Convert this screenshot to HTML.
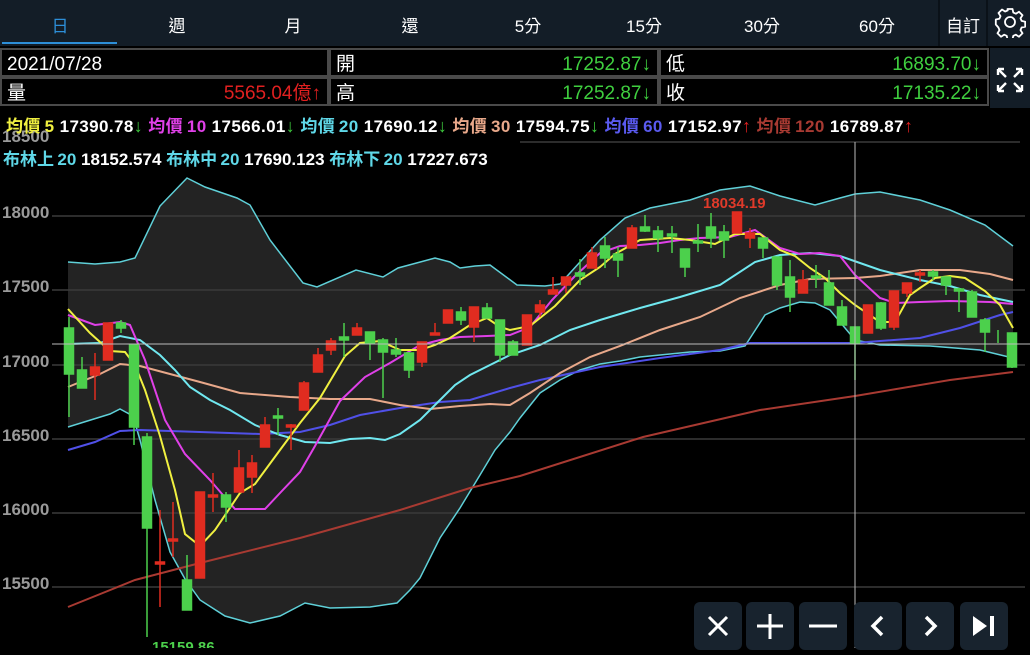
<!DOCTYPE html>
<html><head><meta charset="utf-8"><style>
*{margin:0;padding:0;box-sizing:border-box}
body{width:1030px;height:648px;background:#000;overflow:hidden;position:relative;font-family:"Liberation Sans","Noto Sans CJK TC",sans-serif;color:#fff}
.tabs{position:absolute;left:0;top:0;width:1030px;height:46px;background:#131d27}
.tab{position:absolute;top:12px;font-size:17px;transform:translateX(-50%)}
.ul{position:absolute;left:2px;top:42px;width:115px;height:2px;background:#2d8fd8}
.vs{position:absolute;top:0;width:2px;height:46px;background:#0a1118}
.info{position:absolute;top:48px;left:0;width:990px;height:60px}
.cell{position:absolute;height:29px;border:2px solid #4a4a4a;background:#000;font-size:19px;line-height:25px;padding:2px 5px 0}
.cell .v{position:absolute;right:6px;top:2px}
.g{color:#3fcf3f}.r{color:#e02020}
.exp{position:absolute;left:990px;top:48px;width:40px;height:60px;background:#131d27}
.ma{position:absolute;left:6px;font-size:17px;font-weight:bold;white-space:nowrap}
.ma .g,.ma .r{font-size:18px}
.btn{position:absolute;top:602px;width:48px;height:48px;background:#18232e;border-radius:6px}
</style></head><body>
<div class="tabs">
<div class="tab" style="left:60px;color:#2d8fd8">日</div>
<div class="tab" style="left:177px">週</div>
<div class="tab" style="left:293px">月</div>
<div class="tab" style="left:410px">還</div>
<div class="tab" style="left:528px">5分</div>
<div class="tab" style="left:644px">15分</div>
<div class="tab" style="left:762px">30分</div>
<div class="tab" style="left:877px">60分</div>
<div class="tab" style="left:963px">自訂</div>
<div class="ul"></div>
<div class="vs" style="left:938px"></div><div class="vs" style="left:986px"></div>
<svg style="position:absolute;left:994px;top:6px" width="32" height="32" viewBox="0 0 32 32"><path d="M13.5 3h5l.8 3.6 2.6 1.1 3.1-2 3.5 3.5-2 3.1 1.1 2.6 3.6.8v5l-3.6.8-1.1 2.6 2 3.1-3.5 3.5-3.1-2-2.6 1.1-.8 3.6h-5l-.8-3.6-2.6-1.1-3.1 2-3.5-3.5 2-3.1-1.1-2.6L1.8 18.5v-5l3.6-.8 1.1-2.6-2-3.1 3.5-3.5 3.1 2 2.6-1.1z" fill="none" stroke="#fff" stroke-width="1.8" stroke-linejoin="round"/><circle cx="16" cy="16" r="5" fill="none" stroke="#fff" stroke-width="1.8"/></svg>
</div>
<div class="info">
<div class="cell" style="left:0;top:0;width:329px">2021/07/28</div>
<div class="cell" style="left:329px;top:0;width:330px">開<span class="v g">17252.87↓</span></div>
<div class="cell" style="left:659px;top:0;width:330px">低<span class="v g">16893.70↓</span></div>
<div class="cell" style="left:0;top:29px;width:329px">量<span class="v r">5565.04億↑</span></div>
<div class="cell" style="left:329px;top:29px;width:330px">高<span class="v g">17252.87↓</span></div>
<div class="cell" style="left:659px;top:29px;width:330px">收<span class="v g">17135.22↓</span></div>
</div>
<div class="exp"><svg width="40" height="60" viewBox="0 0 40 60"><g stroke="#fff" stroke-width="2.4" fill="none"><path d="M8 21l8 8M8 21h6M8 21v6M32 21l-8 8M32 21h-6M32 21v6M8 43l8-8M8 43h6M8 43v-6M32 43l-8-8M32 43h-6M32 43v-6"/></g></svg></div>

<svg style="position:absolute;left:0;top:0" width="1030" height="648" viewBox="0 0 1030 648">
<g fill="#9a9a9a" font-size="17" font-weight="bold" font-family="Liberation Sans,sans-serif">
<text x="2" y="142">18500</text><text x="2" y="218">18000</text><text x="2" y="292">17500</text><text x="2" y="367">17000</text><text x="2" y="441">16500</text><text x="2" y="515">16000</text><text x="2" y="589">15500</text></g>
<polygon fill="#232323" points="68,262 95,264 120,262 135,258 160,206 187,178 205,187 237,198 250,205 270,240 303,283 317,287 356,270 383,277 398,268 435,258 450,262 460,268 475,266 490,265 517,285 545,286 560,284 600,240 625,218 650,208 690,200 720,190 750,186 780,196 815,205 840,198 855,194 880,192 920,200 950,210 985,225 1013,246 1013,358 980,350 930,346 880,345 855,340 830,310 815,303 800,302 780,308 765,315 745,346 720,351 690,352 660,355 640,357 620,361 600,364 580,370 560,380 540,393 520,418 510,432 495,450 480,475 460,508 440,538 420,578 410,590 397,603 370,607 330,608 305,603 280,616 250,623 225,616 200,600 185,579 170,552 155,500 140,440 133,416 120,409 110,414 68,427"/>
<g stroke="#3a3a3a" stroke-width="1.5"><line x1="520" y1="142" x2="1020" y2="142"/><line x1="52" y1="216" x2="1025" y2="216"/><line x1="52" y1="290" x2="1025" y2="290"/><line x1="52" y1="365" x2="1025" y2="365"/><line x1="52" y1="439" x2="1025" y2="439"/><line x1="52" y1="513" x2="1025" y2="513"/><line x1="52" y1="587" x2="1025" y2="587"/></g>
<g fill="none" stroke-width="1.5">
<polyline stroke="#5fd0d8" points="68,262 95,264 120,262 135,258 160,206 187,178 205,187 237,198 250,205 270,240 303,283 317,287 356,270 383,277 398,268 435,258 450,262 460,268 475,266 490,265 517,285 545,286 560,284 600,240 625,218 650,208 690,200 720,190 750,186 780,196 815,205 840,198 855,194 880,192 920,200 950,210 985,225 1013,246"/>
<polyline stroke="#5fd0d8" points="68,427 110,414 120,409 133,416 140,440 155,500 170,552 185,579 200,600 225,616 250,623 280,616 305,603 330,608 370,607 397,603 410,590 420,578 440,538 460,508 480,475 495,450 510,432 520,418 540,393 560,380 580,370 600,364 620,361 640,357 660,355 690,352 720,351 745,346 765,315 780,308 800,302 815,303 830,310 855,340 880,345 930,346 980,350 1013,358"/>
<polyline stroke="#a83a32" stroke-width="2" points="68,607 135,580 200,563 300,538 400,510 470,488 520,476 643,437 760,410 855,396 950,380 1013,372"/>
<polyline stroke="#5050e8" stroke-width="2" points="68,450 95,442 120,431 140,430 200,432 260,434 300,432 330,425 360,415 400,408 440,402 470,400 510,388 540,380 600,367 660,358 720,350 750,343 855,343 880,341 920,338 960,328 1000,315 1013,312"/>
<polyline stroke="#e8a88a" stroke-width="2" points="68,387 100,374 120,364 140,366 170,374 200,382 240,393 290,397 330,399 370,399 400,405 430,409 460,406 490,404 510,405 530,393 560,373 590,357 620,346 660,330 700,317 740,298 780,285 810,279 855,278 880,276 920,270 960,270 990,274 1013,280"/>
<polyline stroke="#70e8f0" stroke-width="2" points="68,344 100,343 120,336 140,340 160,355 175,370 190,387 210,400 230,410 255,425 280,435 305,442 330,443 350,439 370,438 385,440 400,434 420,420 440,400 455,385 470,375 490,365 510,355 540,345 570,330 600,320 640,308 680,297 720,285 755,262 780,255 810,253 840,256 880,270 920,280 950,286 980,295 1013,302"/>
<polyline stroke="#e040e8" stroke-width="2" points="68,315 95,325 120,322 130,325 145,360 165,420 185,454 210,480 235,509 265,509 280,493 300,472 315,446 340,401 365,377 390,363 420,345 440,340 460,337 487,336 510,335 530,327 552,300 575,276 600,253 620,246 640,245 660,243 680,240 700,238 730,237 755,230 780,248 800,254 820,253 840,256 855,275 880,298 895,303 920,302 950,301 990,302 1013,304"/>
<polyline stroke="#f0f040" stroke-width="2" points="68,309 90,333 110,351 125,352 135,365 145,390 160,436 175,490 185,534 200,546 215,530 240,493 255,484 280,450 300,423 320,398 345,356 360,343 380,341 400,350 420,350 435,345 450,338 470,325 487,318 500,327 510,330 530,326 555,306 580,280 600,267 615,254 640,240 670,238 690,240 715,244 735,234 760,234 780,250 795,256 810,268 825,278 840,293 855,305 880,322 895,322 910,295 920,288 935,278 950,276 965,278 985,291 1000,305 1013,328"/>
</g>
<g stroke-width="1.5">
<g stroke="#4cd04c" fill="#4cd04c">
<line x1="69" y1="317" x2="69" y2="417"/><rect x="64.5" y="328" width="9" height="46"/>
<line x1="82" y1="357" x2="82" y2="388"/><rect x="77.5" y="370" width="9" height="18"/>
<line x1="121" y1="320" x2="121" y2="333"/><rect x="116.5" y="323" width="9" height="5"/>
<line x1="134" y1="345" x2="134" y2="445"/><rect x="129.5" y="345" width="9" height="82"/>
<line x1="147" y1="433" x2="147" y2="637"/><rect x="142.5" y="437" width="9" height="91"/>
<line x1="187" y1="555" x2="187" y2="610"/><rect x="182.5" y="580" width="9" height="30"/>
<line x1="226" y1="492" x2="226" y2="522"/><rect x="221.5" y="495" width="9" height="12"/>
<line x1="278" y1="408" x2="278" y2="435"/><rect x="273.5" y="416" width="9" height="2"/>
<line x1="344" y1="323" x2="344" y2="357"/><rect x="339.5" y="337" width="9" height="3"/>
<line x1="370" y1="332" x2="370" y2="360"/><rect x="365.5" y="332" width="9" height="11"/>
<line x1="383" y1="338" x2="383" y2="398"/><rect x="378.5" y="340" width="9" height="12"/>
<line x1="396" y1="338" x2="396" y2="357"/><rect x="391.5" y="350" width="9" height="4"/>
<line x1="409" y1="352" x2="409" y2="378"/><rect x="404.5" y="353" width="9" height="17"/>
<line x1="461" y1="307" x2="461" y2="325"/><rect x="456.5" y="312" width="9" height="8"/>
<line x1="487" y1="303" x2="487" y2="318"/><rect x="482.5" y="308" width="9" height="10"/>
<line x1="500" y1="320" x2="500" y2="362"/><rect x="495.5" y="320" width="9" height="35"/>
<line x1="513" y1="340" x2="513" y2="355"/><rect x="508.5" y="342" width="9" height="13"/>
<line x1="580" y1="259" x2="580" y2="285"/><rect x="575.5" y="273" width="9" height="3"/>
<line x1="605" y1="237" x2="605" y2="268"/><rect x="600.5" y="246" width="9" height="12"/>
<line x1="618" y1="247" x2="618" y2="277"/><rect x="613.5" y="254" width="9" height="6"/>
<line x1="645" y1="215" x2="645" y2="232"/><rect x="640.5" y="227" width="9" height="4"/>
<line x1="658" y1="226" x2="658" y2="252"/><rect x="653.5" y="231" width="9" height="7"/>
<line x1="672" y1="226" x2="672" y2="253"/><rect x="667.5" y="234" width="9" height="2"/>
<line x1="685" y1="249" x2="685" y2="277"/><rect x="680.5" y="249" width="9" height="18"/>
<line x1="698" y1="224" x2="698" y2="252"/><rect x="693.5" y="241" width="9" height="2"/>
<line x1="711" y1="213" x2="711" y2="248"/><rect x="706.5" y="227" width="9" height="11"/>
<line x1="724" y1="225" x2="724" y2="258"/><rect x="719.5" y="232" width="9" height="8"/>
<line x1="763" y1="238" x2="763" y2="258"/><rect x="758.5" y="238" width="9" height="10"/>
<line x1="777" y1="257" x2="777" y2="290"/><rect x="772.5" y="257" width="9" height="28"/>
<line x1="790" y1="260" x2="790" y2="312"/><rect x="785.5" y="277" width="9" height="20"/>
<line x1="816" y1="265" x2="816" y2="288"/><rect x="811.5" y="276" width="9" height="2"/>
<line x1="829" y1="270" x2="829" y2="305"/><rect x="824.5" y="283" width="9" height="22"/>
<line x1="842" y1="300" x2="842" y2="325"/><rect x="837.5" y="307" width="9" height="18"/>
<line x1="855" y1="327" x2="855" y2="380"/><rect x="850.5" y="327" width="9" height="16"/>
<line x1="881" y1="302" x2="881" y2="330"/><rect x="876.5" y="303" width="9" height="25"/>
<line x1="933" y1="270" x2="933" y2="280"/><rect x="928.5" y="272" width="9" height="4"/>
<line x1="946" y1="277" x2="946" y2="295"/><rect x="941.5" y="277" width="9" height="8"/>
<line x1="959" y1="288" x2="959" y2="312"/><rect x="954.5" y="289" width="9" height="2"/>
<line x1="972" y1="290" x2="972" y2="317"/><rect x="967.5" y="292" width="9" height="25"/>
<line x1="985" y1="318" x2="985" y2="352"/><rect x="980.5" y="320" width="9" height="12"/>
<line x1="998" y1="330" x2="998" y2="343"/>
<line x1="1012" y1="333" x2="1012" y2="368"/><rect x="1007.5" y="333" width="9" height="34"/>
</g>
<g stroke="#e02c20" fill="#e02c20">
<line x1="95" y1="353" x2="95" y2="400"/><rect x="90.5" y="367" width="9" height="8"/>
<line x1="108" y1="323" x2="108" y2="360"/><rect x="103.5" y="323" width="9" height="37"/>
<line x1="160" y1="510" x2="160" y2="607"/><rect x="155.5" y="562" width="9" height="2"/>
<line x1="173" y1="502" x2="173" y2="557"/><rect x="168.5" y="539" width="9" height="2"/>
<line x1="200" y1="492" x2="200" y2="578"/><rect x="195.5" y="492" width="9" height="86"/>
<line x1="213" y1="473" x2="213" y2="512"/><rect x="208.5" y="495" width="9" height="2"/>
<line x1="239" y1="450" x2="239" y2="492"/><rect x="234.5" y="468" width="9" height="24"/>
<line x1="252" y1="455" x2="252" y2="493"/><rect x="247.5" y="463" width="9" height="14"/>
<line x1="265" y1="417" x2="265" y2="447"/><rect x="260.5" y="425" width="9" height="22"/>
<line x1="291" y1="424" x2="291" y2="450"/><rect x="286.5" y="425" width="9" height="2"/>
<line x1="304" y1="381" x2="304" y2="410"/><rect x="299.5" y="383" width="9" height="27"/>
<line x1="318" y1="348" x2="318" y2="372"/><rect x="313.5" y="355" width="9" height="17"/>
<line x1="331" y1="338" x2="331" y2="355"/><rect x="326.5" y="341" width="9" height="9"/>
<line x1="357" y1="323" x2="357" y2="335"/><rect x="352.5" y="328" width="9" height="7"/>
<line x1="422" y1="342" x2="422" y2="367"/><rect x="417.5" y="342" width="9" height="20"/>
<line x1="435" y1="323" x2="435" y2="335"/><rect x="430.5" y="333" width="9" height="2"/>
<line x1="448" y1="310" x2="448" y2="323"/><rect x="443.5" y="310" width="9" height="13"/>
<line x1="474" y1="307" x2="474" y2="342"/><rect x="469.5" y="307" width="9" height="20"/>
<line x1="527" y1="315" x2="527" y2="345"/><rect x="522.5" y="315" width="9" height="30"/>
<line x1="540" y1="300" x2="540" y2="317"/><rect x="535.5" y="305" width="9" height="7"/>
<line x1="553" y1="277" x2="553" y2="294"/><rect x="548.5" y="290" width="9" height="4"/>
<line x1="566" y1="277" x2="566" y2="293"/><rect x="561.5" y="277" width="9" height="8"/>
<line x1="592" y1="247" x2="592" y2="268"/><rect x="587.5" y="253" width="9" height="15"/>
<line x1="632" y1="225" x2="632" y2="248"/><rect x="627.5" y="228" width="9" height="20"/>
<line x1="737" y1="212" x2="737" y2="233"/><rect x="732.5" y="212" width="9" height="21"/>
<line x1="750" y1="228" x2="750" y2="248"/><rect x="745.5" y="233" width="9" height="5"/>
<line x1="803" y1="270" x2="803" y2="293"/><rect x="798.5" y="280" width="9" height="13"/>
<line x1="868" y1="305" x2="868" y2="333"/><rect x="863.5" y="305" width="9" height="28"/>
<line x1="894" y1="291" x2="894" y2="330"/><rect x="889.5" y="291" width="9" height="36"/>
<line x1="907" y1="283" x2="907" y2="297"/><rect x="902.5" y="283" width="9" height="10"/>
<line x1="920" y1="270" x2="920" y2="282"/><rect x="915.5" y="273" width="9" height="2"/>
</g></g>
<line x1="52" y1="344" x2="1030" y2="344" stroke="#bbb" stroke-width="1"/>
<line x1="855" y1="142" x2="855" y2="648" stroke="#bbb" stroke-width="1"/>
<text x="703" y="208" fill="#e03a2a" font-size="15" font-weight="bold" font-family="Liberation Sans,sans-serif">18034.19</text>
<text x="152" y="652" fill="#4cd04c" font-size="15" font-weight="bold" font-family="Liberation Sans,sans-serif">15159.86</text>
</svg>
<div class="ma" style="top:112px;letter-spacing:0.4px"><span style="color:#f0f040">均價&#8201;5</span> 17390.78<span class="g">↓</span> <span style="color:#e040e8">均價&#8201;10</span> 17566.01<span class="g">↓</span> <span style="color:#5fd8e8">均價&#8201;20</span> 17690.12<span class="g">↓</span> <span style="color:#e8a88a">均價&#8201;30</span> 17594.75<span class="g">↓</span> <span style="color:#5a5af0">均價&#8201;60</span> 17152.97<span class="r">↑</span> <span style="color:#a83a32">均價&#8201;120</span> 16789.87<span class="r">↑</span></div>
<div class="ma" style="top:145px;left:3px"><span style="color:#5fd8e8">布林上&#8201;20</span> 18152.574 <span style="color:#5fd8e8">布林中&#8201;20</span> 17690.123 <span style="color:#5fd8e8">布林下&#8201;20</span> 17227.673</div>
<div class="btn" style="left:694px"><svg width="48" height="48"><path d="M15 15l18 18M33 15L15 33" stroke="#fff" stroke-width="3"/></svg></div>
<div class="btn" style="left:746px"><svg width="48" height="48"><path d="M24 12v25M11 24h26" stroke="#fff" stroke-width="3"/></svg></div>
<div class="btn" style="left:799px"><svg width="48" height="48"><path d="M10 24h28" stroke="#fff" stroke-width="3"/></svg></div>
<div class="btn" style="left:854px"><svg width="48" height="48"><path d="M28 15l-9 9 9 9" stroke="#fff" stroke-width="3.5" fill="none"/></svg></div>
<div class="btn" style="left:906px"><svg width="48" height="48"><path d="M20 15l9 9-9 9" stroke="#fff" stroke-width="3.5" fill="none"/></svg></div>
<div class="btn" style="left:960px"><svg width="48" height="48"><path d="M13 14l14 10-14 10z" fill="#fff"/><rect x="30" y="14" width="4" height="20" fill="#fff"/></svg></div>
</body></html>
